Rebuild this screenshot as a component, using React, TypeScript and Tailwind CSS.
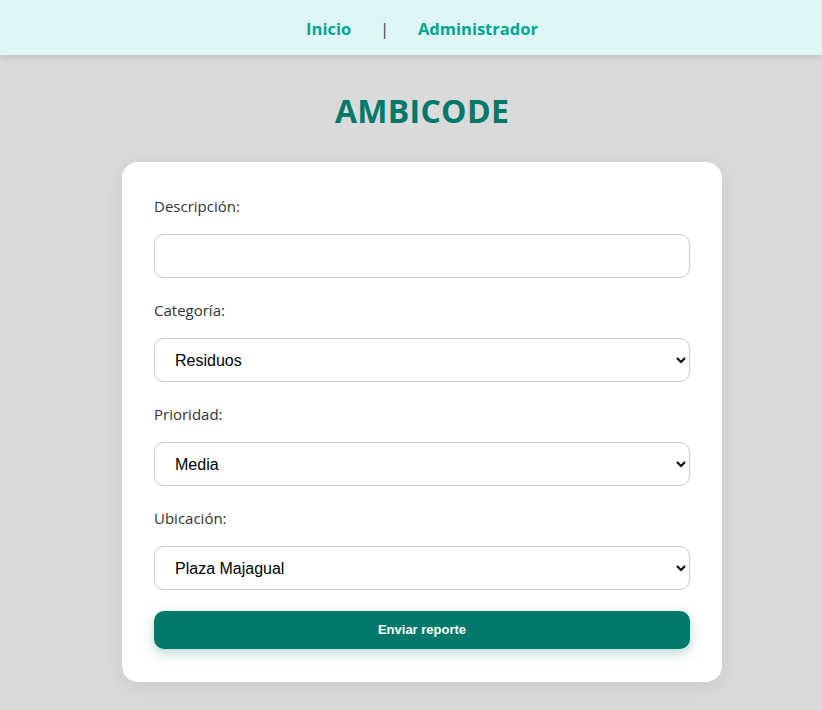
import React from "react";

function Field({ label, children }: { label: string; children: React.ReactNode }) {
  return (
    <div className="mb-[20px]">
      <label className="block text-[15px] leading-[24px] text-[#333] mb-[16px]">{label}</label>
      {children}
    </div>
  );
}

const selectCls =
  "block w-full h-[44px] rounded-[10px] border border-[#ccc] bg-white pl-[16px] pr-[8px] text-[16px] text-black outline-none";

const arial = { fontFamily: '"Liberation Sans", Arial, sans-serif' };

export default function App() {
  return (
    <div
      className="min-h-[710px] bg-[#dadada]"
      style={{ fontFamily: '"Open Sans", "Noto Sans", sans-serif' }}
    >
      <header className="h-[55px] bg-[#dff6f8] shadow-[0_2px_6px_rgba(0,0,0,0.12)] pl-[22px] flex items-center justify-center gap-[29px] text-[16.5px] font-bold text-[#00a693] pt-[3px]">
        <span>Inicio</span>
        <span className="font-normal text-[#444] text-[16px]">|</span>
        <span>Administrador</span>
      </header>
      <div className="pl-[22px]">
        <h1 className="text-center text-[32px] font-bold text-[#00796b] mt-[34px] leading-[44px] tracking-[0.3px]">
          AMBICODE
        </h1>
        <div className="mx-auto mt-[29px] w-[600px] rounded-[16px] bg-white px-[32px] pt-[32px] pb-[33px] shadow-[0_4px_20px_rgba(0,0,0,0.08)]">
          <Field label="Descripción:">
            <input className="block w-full h-[44px] rounded-[10px] border border-[#ccc] bg-white px-[16px] text-[16px] outline-none" />
          </Field>
          <Field label="Categoría:">
            <select className={selectCls} style={arial} defaultValue="Residuos">
              <option>Residuos</option>
            </select>
          </Field>
          <Field label="Prioridad:">
            <select className={selectCls} style={arial} defaultValue="Media">
              <option>Media</option>
            </select>
          </Field>
          <Field label="Ubicación:">
            <select className={selectCls} style={arial} defaultValue="Plaza Majagual">
              <option>Plaza Majagual</option>
            </select>
          </Field>
          <button
            className="mt-[21px] block w-full h-[38px] rounded-[10px] bg-[#00796b] text-white text-[13px] font-bold shadow-[0_4px_12px_rgba(0,121,107,0.3)]"
            style={arial}
          >
            Enviar reporte
          </button>
        </div>
      </div>
    </div>
  );
}
